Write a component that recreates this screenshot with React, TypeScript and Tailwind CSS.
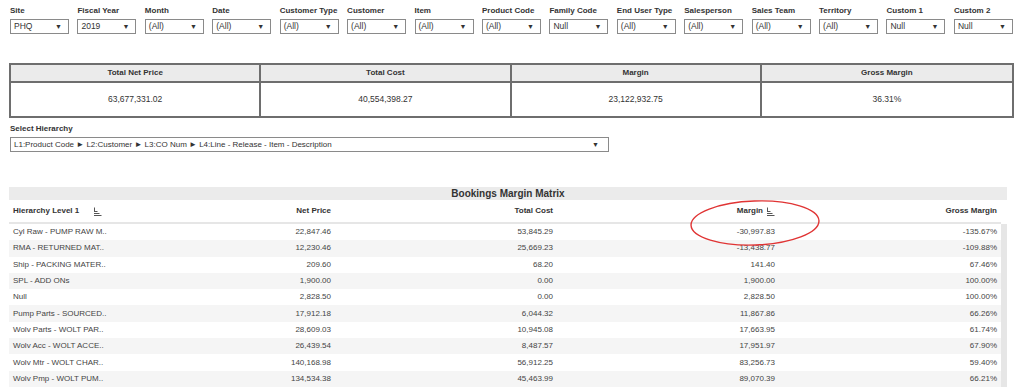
import React from 'react';

const filters = [
  { label: 'Site', value: 'PHQ' },
  { label: 'Fiscal Year', value: '2019' },
  { label: 'Month', value: '(All)' },
  { label: 'Date', value: '(All)' },
  { label: 'Customer Type', value: '(All)' },
  { label: 'Customer', value: '(All)' },
  { label: 'Item', value: '(All)' },
  { label: 'Product Code', value: '(All)' },
  { label: 'Family Code', value: 'Null' },
  { label: 'End User Type', value: '(All)' },
  { label: 'Salesperson', value: '(All)' },
  { label: 'Sales Team', value: '(All)' },
  { label: 'Territory', value: '(All)' },
  { label: 'Custom 1', value: 'Null' },
  { label: 'Custom 2', value: 'Null' },
];

const summary = [
  { label: 'Total Net Price', value: '63,677,331.02' },
  { label: 'Total Cost', value: '40,554,398.27' },
  { label: 'Margin', value: '23,122,932.75' },
  { label: 'Gross Margin', value: '36.31%' },
];

const rows = [
  ['Cyl Raw - PUMP RAW M..', '22,847.46', '53,845.29', '-30,997.83', '-135.67%'],
  ['RMA - RETURNED MAT..', '12,230.46', '25,669.23', '-13,438.77', '-109.88%'],
  ['Ship - PACKING MATER..', '209.60', '68.20', '141.40', '67.46%'],
  ['SPL - ADD ONs', '1,900.00', '0.00', '1,900.00', '100.00%'],
  ['Null', '2,828.50', '0.00', '2,828.50', '100.00%'],
  ['Pump Parts - SOURCED..', '17,912.18', '6,044.32', '11,867.86', '66.26%'],
  ['Wolv Parts - WOLT PAR..', '28,609.03', '10,945.08', '17,663.95', '61.74%'],
  ['Wolv Acc - WOLT ACCE..', '26,439.54', '8,487.57', '17,951.97', '67.90%'],
  ['Wolv Mtr - WOLT CHAR..', '140,168.98', '56,912.25', '83,256.73', '59.40%'],
  ['Wolv Pmp - WOLT PUM..', '134,534.38', '45,463.99', '89,070.39', '66.21%'],
];

const Caret = () => <span className="text-[7px] leading-none text-[#333]">▼</span>;

const SortIcon = () => (
  <svg width="9" height="9" viewBox="0 0 9 9" className="inline-block">
    <g stroke="#555" strokeWidth="1">
      <line x1="1.5" y1="0.5" x2="1.5" y2="4" />
      <line x1="1" y1="4.5" x2="4.5" y2="4.5" />
      <line x1="1" y1="6.5" x2="6.5" y2="6.5" />
      <line x1="1" y1="8.5" x2="8.5" y2="8.5" />
    </g>
  </svg>
);

export default function App() {
  return (
    <div className="relative w-[1024px] h-[392px] overflow-hidden bg-white text-[#333]" style={{ fontFamily: '"Liberation Sans", Arial, sans-serif' }}>
      {/* filter bar */}
      <div className="flex justify-between pl-[10px] pr-[11px] pt-[5px]">
        {filters.map((f) => (
          <div key={f.label} className="w-[59px]">
            <div className="h-[12px] whitespace-nowrap text-[8px] font-bold leading-[12px] text-[#333]">{f.label}</div>
            <div className="mt-[2px] flex h-[15px] items-center justify-between border border-[#8a8a8a] pl-[3px] pr-[6px]">
              <span className="text-[8.5px] text-[#333]">{f.value}</span>
              <Caret />
            </div>
          </div>
        ))}
      </div>

      {/* summary */}
      <div className="ml-[9px] mt-[29px] grid w-[1005px] grid-cols-4 border-2 border-[#6e6e6e]">
        {summary.map((s, i) => (
          <div key={s.label} className={i < 3 ? 'border-r-2 border-[#6e6e6e]' : ''}>
            <div className="flex h-[18px] items-center justify-center border-b-2 border-[#6e6e6e] bg-[#ebebeb] text-[8px] font-bold">{s.label}</div>
            <div className="flex h-[33px] items-center justify-center text-[8.5px] text-[#333]">{s.value}</div>
          </div>
        ))}
      </div>

      {/* hierarchy select */}
      <div className="ml-[10px] mt-[5px]">
        <div className="text-[8px] font-bold leading-[11px]">Select Hierarchy</div>
        <div className="mt-[3px] flex h-[15px] w-[599px] items-center justify-between border border-[#8a8a8a] pl-[3px] pr-[9px]">
          <span className="text-[8px] text-[#333]">L1:Product Code ► L2:Customer ► L3:CO Num ► L4:Line - Release - Item - Description</span>
          <Caret />
        </div>
      </div>

      {/* matrix */}
      <div className="ml-[9px] mt-[35px] w-[998px]">
        <div className="flex h-[13px] items-center justify-center bg-[#ebebeb] text-[10px] font-bold text-[#333]">Bookings Margin Matrix</div>
        <div className="flex h-[24px] w-[992px] items-end border-b-2 border-[#e6e6e6] pb-[5px] text-[8px] font-bold text-[#333]">
          <div className="flex w-[104px] items-center gap-[14px] pl-[4px]">
            <span>Hierarchy Level 1</span>
            <SortIcon />
          </div>
          <div className="w-[222px] pr-[4px] text-right">Net Price</div>
          <div className="w-[222px] pr-[4px] text-right">Total Cost</div>
          <div className="flex w-[222px] items-center justify-end gap-[3px] pr-[4px]">
            <span>Margin</span>
            <SortIcon />
          </div>
          <div className="w-[222px] pr-[4px] text-right">Gross Margin</div>
        </div>
        <div className="flex">
          <div className="w-[992px]">
            {rows.map((r, i) => (
              <div key={r[0]} className={`flex h-[16.3px] items-center text-[8px] text-[#444] ${i % 2 === 1 ? 'bg-[#f5f5f5]' : 'bg-white'}`}>
                <div className="w-[104px] whitespace-nowrap pl-[4px]">{r[0]}</div>
                <div className="w-[222px] pr-[4px] text-right">{r[1]}</div>
                <div className="w-[222px] pr-[4px] text-right">{r[2]}</div>
                <div className="w-[222px] pr-[4px] text-right">{r[3]}</div>
                <div className="w-[222px] pr-[4px] text-right">{r[4]}</div>
              </div>
            ))}
          </div>
          <div className="w-[6px] bg-[#e6e6e6]" />
        </div>
      </div>

      {/* red annotation */}
      <svg className="pointer-events-none absolute left-[686px] top-[197px]" width="138" height="52" viewBox="0 0 138 52">
        <ellipse cx="69" cy="26" rx="64" ry="22" fill="none" stroke="#e03434" strokeWidth="1.4" transform="rotate(-2 69 26)" />
      </svg>
    </div>
  );
}
